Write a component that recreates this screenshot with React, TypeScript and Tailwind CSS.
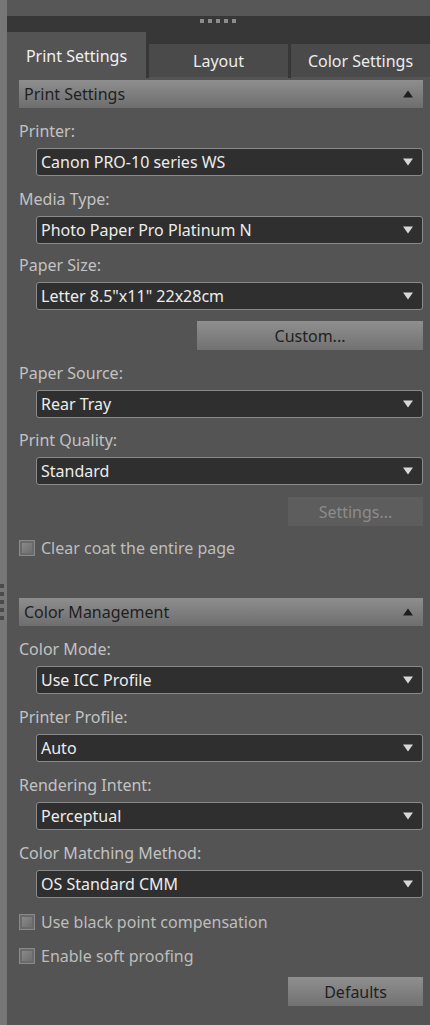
import React from "react";

const font = { fontFamily: '"Noto Sans", "Open Sans", sans-serif' };

function DownArrow() {
  return (
    <svg width="10" height="8" viewBox="0 0 10 8" className="shrink-0">
      <path d="M0 0.5 H10 L5 7.5 Z" fill="#d8d8d8" />
    </svg>
  );
}

function UpArrow() {
  return (
    <svg width="10" height="8" viewBox="0 0 10 8" className="shrink-0">
      <path d="M0 7.5 H10 L5 0.5 Z" fill="#1e1e1e" />
    </svg>
  );
}

function SectionHeader({ title }: { title: string }) {
  return (
    <div className="mr-[7px] flex h-[28px] items-center justify-between bg-gradient-to-b from-[#8e8e8e] to-[#6e6e6e] pl-[5px] pr-[10px] text-[16px] text-[#1f1f1f]">
      <span>{title}</span>
      <UpArrow />
    </div>
  );
}

function Field({ label, value, className }: { label: string; value: string; className?: string }) {
  return (
    <div className={"flex flex-col " + (className ?? "mt-[13px]")}>
      <div className="h-[20px] text-[16px] leading-[20px] text-[#c2c2c2]">{label}</div>
      <div className="mt-[7px] mr-[7px] ml-[17px] flex h-[28px] items-center justify-between rounded-[3px] border border-[#8a8a8a] bg-[#2f2f2f] pl-[4px] pr-[9px] text-[16px] text-[#ececec]">
        <span>{value}</span>
        <DownArrow />
      </div>
    </div>
  );
}

function Button({
  label,
  disabled,
  wide,
  className,
}: {
  label: string;
  disabled?: boolean;
  wide?: boolean;
  className?: string;
}) {
  return (
    <div className={"mr-[7px] flex justify-end " + (className ?? "mt-[11px]")}>
      <div
        className={
          (wide ? "w-[226px] " : "w-[135px] ") +
          "flex h-[29px] items-center justify-center text-[16px] " +
          (disabled
            ? "bg-[#5d5d5d] text-[#8c8c8c]"
            : "bg-gradient-to-b from-[#8f8f8f] to-[#727272] text-[#1f1f1f]")
        }
      >
        {label}
      </div>
    </div>
  );
}

function Check({ label, className }: { label: string; className?: string }) {
  return (
    <div className={"flex h-[20px] items-center gap-[6px] text-[16px] text-[#bdbdbd] " + (className ?? "")}>
      <div className="flex h-[16px] w-[16px] items-center justify-center border border-[#8a8a8a] bg-[#6a6a6a]">
        <div className="h-[10px] w-[10px] bg-gradient-to-br from-[#8a8a8a] to-[#6e6e6e]" />
      </div>
      <span>{label}</span>
    </div>
  );
}

export default function App() {
  return (
    <div className="flex h-[1025px] w-[430px] overflow-hidden bg-[#545454]" style={font}>
      {/* left resize strip */}
      <div className="relative w-[7px] shrink-0 bg-[#767676]">
        <div className="absolute left-0 top-[584px] flex flex-col gap-[4px]">
          {[0, 1, 2, 3, 4].map((i) => (
            <div key={i} className="h-[4px] w-[4px] bg-[#4a4a4a]" />
          ))}
        </div>
      </div>

      <div className="flex min-w-0 flex-1 flex-col">
        <div className="h-[16px] bg-[#575757]" />
        <div className="flex h-[16px] items-start justify-center gap-[4px] bg-[#373737] pt-[3px] pr-[2px]">
          {[0, 1, 2, 3, 4].map((i) => (
            <div key={i} className="h-[4px] w-[4px] bg-[#8c8c8c]" />
          ))}
        </div>

        {/* tabs */}
        <div className="flex h-[46px] items-end bg-[#373737]">
          <div className="flex h-[46px] w-[139px] items-center justify-center bg-[#545454] pt-[1px] text-[16px] text-[#f0f0f0]">
            Print Settings
          </div>
          <div className="ml-[3px] flex h-[34px] w-[139px] items-center justify-center border-b border-[#545454] bg-[#4a4a4a] text-[16px] text-[#ececec]">
            Layout
          </div>
          <div className="ml-[3px] flex h-[34px] flex-1 items-center justify-center border-b border-[#545454] bg-[#4a4a4a] text-[16px] text-[#ececec]">
            Color Settings
          </div>
        </div>

        <div className="flex flex-col pl-[12px] pt-[2px]">
          <SectionHeader title="Print Settings" />
          <Field label="Printer:" value="Canon PRO-10 series WS" />
          <Field label="Media Type:" value="Photo Paper Pro Platinum N" />
          <Field label="Paper Size:" value={'Letter 8.5"x11" 22x28cm'} className="mt-[11px]" />
          <Button label="Custom..." wide />
          <Field label="Paper Source:" value="Rear Tray" />
          <Field label="Print Quality:" value="Standard" className="mt-[12px]" />
          <Button label="Settings..." disabled className="mt-[12px]" />
          <Check label="Clear coat the entire page" className="mt-[12px]" />

          <div className="mt-[40px]">
            <SectionHeader title="Color Management" />
          </div>
          <Field label="Color Mode:" value="Use ICC Profile" />
          <Field label="Printer Profile:" value="Auto" />
          <Field label="Rendering Intent:" value="Perceptual" />
          <Field label="Color Matching Method:" value="OS Standard CMM" />
          <Check label="Use black point compensation" className="mt-[14px]" />
          <Check label="Enable soft proofing" className="mt-[14px]" />
          <Button label="Defaults" />
        </div>
      </div>
    </div>
  );
}
